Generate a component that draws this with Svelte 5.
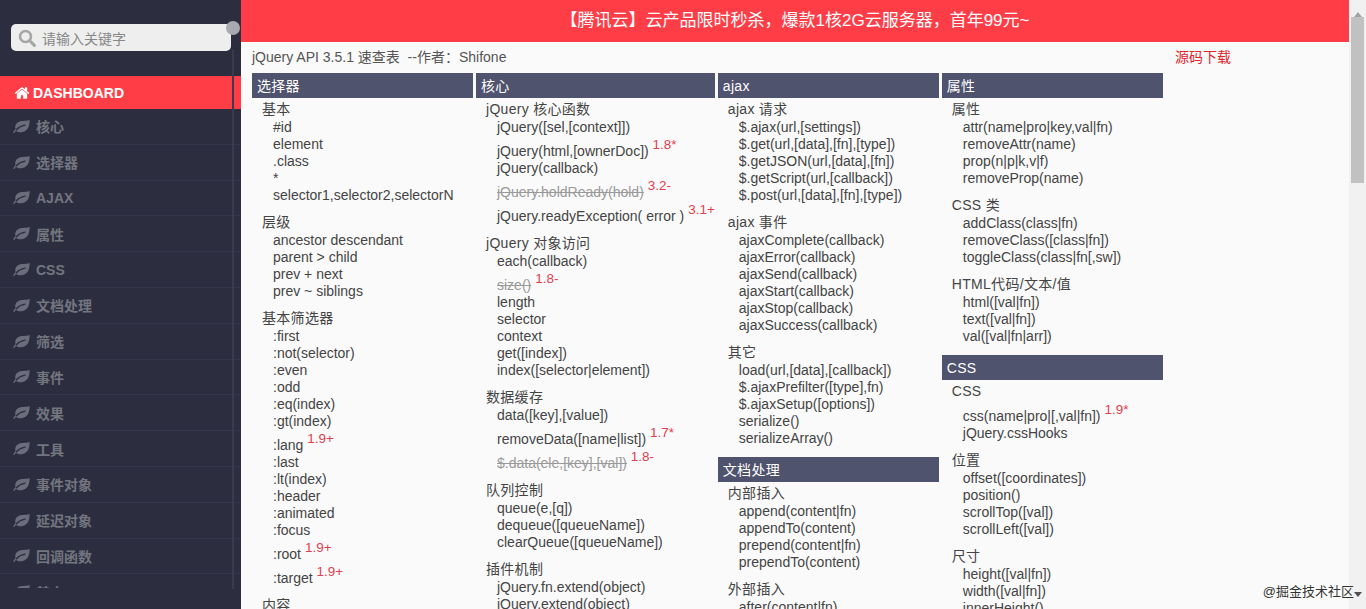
<script>
	const menu = ['核心', '选择器', 'AJAX', '属性', 'CSS', '文档处理', '筛选', '事件', '效果', '工具', '事件对象', '延迟对象', '回调函数', '其它'];

	// item: plain string, or [text, version, removed]
	const columns = [
		[
			{
				head: '选择器',
				groups: [
					{ title: '基本', items: ['#id', 'element', '.class', '*', 'selector1,selector2,selectorN'] },
					{ title: '层级', items: ['ancestor descendant', 'parent > child', 'prev + next', 'prev ~ siblings'] },
					{
						title: '基本筛选器',
						items: [':first', ':not(selector)', ':even', ':odd', ':eq(index)', ':gt(index)', [':lang', '1.9+'], ':last', ':lt(index)', ':header', ':animated', ':focus', [':root', '1.9+'], [':target', '1.9+']]
					},
					{ title: '内容', items: [':contains(text)'] }
				]
			}
		],
		[
			{
				head: '核心',
				groups: [
					{
						title: 'jQuery 核心函数',
						items: ['jQuery([sel,[context]])', ['jQuery(html,[ownerDoc])', '1.8*'], 'jQuery(callback)', ['jQuery.holdReady(hold)', '3.2-', true], ['jQuery.readyException( error )', '3.1+']]
					},
					{
						title: 'jQuery 对象访问',
						items: ['each(callback)', ['size()', '1.8-', true], 'length', 'selector', 'context', 'get([index])', 'index([selector|element])']
					},
					{ title: '数据缓存', items: ['data([key],[value])', ['removeData([name|list])', '1.7*'], ['$.data(ele,[key],[val])', '1.8-', true]] },
					{ title: '队列控制', items: ['queue(e,[q])', 'dequeue([queueName])', 'clearQueue([queueName])'] },
					{ title: '插件机制', items: ['jQuery.fn.extend(object)', 'jQuery.extend(object)'] }
				]
			}
		],
		[
			{
				head: 'ajax',
				groups: [
					{ title: 'ajax 请求', items: ['$.ajax(url,[settings])', '$.get(url,[data],[fn],[type])', '$.getJSON(url,[data],[fn])', '$.getScript(url,[callback])', '$.post(url,[data],[fn],[type])'] },
					{ title: 'ajax 事件', items: ['ajaxComplete(callback)', 'ajaxError(callback)', 'ajaxSend(callback)', 'ajaxStart(callback)', 'ajaxStop(callback)', 'ajaxSuccess(callback)'] },
					{ title: '其它', items: ['load(url,[data],[callback])', '$.ajaxPrefilter([type],fn)', '$.ajaxSetup([options])', 'serialize()', 'serializeArray()'] }
				]
			},
			{
				head: '文档处理',
				groups: [
					{ title: '内部插入', items: ['append(content|fn)', 'appendTo(content)', 'prepend(content|fn)', 'prependTo(content)'] },
					{ title: '外部插入', items: ['after(content|fn)'] }
				]
			}
		],
		[
			{
				head: '属性',
				groups: [
					{ title: '属性', items: ['attr(name|pro|key,val|fn)', 'removeAttr(name)', 'prop(n|p|k,v|f)', 'removeProp(name)'] },
					{ title: 'CSS 类', items: ['addClass(class|fn)', 'removeClass([class|fn])', 'toggleClass(class|fn[,sw])'] },
					{ title: 'HTML代码/文本/值', items: ['html([val|fn])', 'text([val|fn])', 'val([val|fn|arr])'] }
				]
			},
			{
				head: 'CSS',
				groups: [
					{ title: 'CSS', items: [['css(name|pro|[,val|fn])', '1.9*'], 'jQuery.cssHooks'] },
					{ title: '位置', items: ['offset([coordinates])', 'position()', 'scrollTop([val])', 'scrollLeft([val])'] },
					{ title: '尺寸', items: ['height([val|fn])', 'width([val|fn])', 'innerHeight()'] }
				]
			}
		]
	];

	const norm = (it) => (Array.isArray(it) ? it : [it, null, false]);
</script>

<div class="page">
	<aside class="sidebar">
		<div class="search">
			<svg class="search-icon" viewBox="0 0 18 18" width="18" height="18" fill="none" stroke="#a6a6a6">
				<circle cx="7.5" cy="7.5" r="5.5" stroke-width="2.6" />
				<path d="M11.8 11.8 16.4 16.4" stroke-width="3" stroke-linecap="round" />
			</svg>
			<span>请输入关键字</span>
		</div>
		<span class="thumb-dot"></span>
		<a class="dash" href="#top">
			<svg viewBox="0 0 1792 1792" width="16" height="16" fill="#fff">
				<path d="M1472 992v480q0 26-19 45t-45 19h-384v-384h-256v384h-384q-26 0-45-19t-19-45v-480q0-1 .5-3t.5-3l575-474 575 474q1 2 1 6zm223-69l-62 74q-8 9-21 11h-3q-13 0-21-7l-692-577-692 577q-12 8-24 7-13-2-21-11l-62-74q-8-10-7-23.500t11-21.500l719-599q32-26 76-26t76 26l244 204v-195q0-14 9-23t23-9h192q14 0 23 9t9 23v408l219 182q10 8 11 21.500t-7 23.500z" />
			</svg>
			DASHBOARD
		</a>
		<nav class="menu">
			{#each menu as name}
				<div class="menu-item">
					<svg viewBox="0 0 17 15" width="17" height="15">
						<path fill="#6b6d7c" d="M16.6.6C15.9 1.700 14.500 1.700 12.200 1.800 8.500 1.900 5.400 2.300 3.500 4.600 2.300 6 1.900 8 2.500 10 1.700 11 .9 12 .3 13.300c-.2.5.6 1.100 1 .6.500-.8 1.100-1.500 1.800-2.200 1.300 1.300 3.300 1.900 5.500 1.500 4-.6 6.600-3 7.500-7 .4-1.900.6-3.900.5-5.600z" />
						<path fill="none" stroke="#2c2e3f" stroke-width="1.300" stroke-linecap="round" d="M3.300 10.800C5.500 8.400 8.400 6.800 12 6.200" />
					</svg>
					<span>{name}</span>
				</div>
			{/each}
		</nav>
	</aside>

	<div class="main">
		<div class="banner">【腾讯云】云产品限时秒杀，爆款1核2G云服务器，首年99元~</div>
		<div class="top-line">
			<span class="doc-title">jQuery API 3.5.1 速查表&nbsp; --作者：Shifone</span>
			<a class="download" href="#top">源码下载</a>
		</div>
		<div class="columns">
			{#each columns as col}
				<div class="col">
					{#each col as section}
						<section>
							<h2>{section.head}</h2>
							{#each section.groups as group}
								<div class="group">
									<h3>{group.title}</h3>
									{#each group.items.map(norm) as [text, ver, removed]}
										<div class="item">
											<span class:removed>{text}</span>
											{#if ver}<sup>{ver}</sup>{/if}
										</div>
									{/each}
								</div>
							{/each}
						</section>
					{/each}
				</div>
			{/each}
		</div>
		<span class="watermark">@掘金技术社区</span>
	</div>

	<div class="scrollbar">
		<span class="arrow up"></span>
		<span class="bar"></span>
		<span class="arrow down"></span>
	</div>
</div>

<style>
	:global(body) {
		margin: 0;
		overflow: hidden;
	}

	.page {
		display: flex;
		height: 609px;
		overflow: hidden;
		font-family: "Liberation Sans", "Noto Sans CJK SC", sans-serif;
		font-size: 14px;
		color: #444;
		background: #fafafa;
	}

	a {
		text-decoration: none;
	}

	/* sidebar */
	.sidebar {
		position: relative;
		display: flex;
		flex-direction: column;
		flex: 0 0 241px;
		height: 609px;
		background: #2c2e3f;
		box-sizing: border-box;
		padding-top: 24px;
	}

	.sidebar::after {
		content: '';
		position: absolute;
		left: 232px;
		top: 50px;
		bottom: 20px;
		width: 2px;
		background: #3a3c4d;
	}

	.search {
		display: flex;
		align-items: center;
		gap: 6px;
		width: 220px;
		height: 27px;
		margin-left: 11px;
		padding-left: 7px;
		box-sizing: border-box;
		border-radius: 5px;
		background: #eee;
		color: #888;
	}

	.search-icon {
		flex: none;
	}

	.thumb-dot {
		position: absolute;
		left: 226px;
		top: 21px;
		width: 14px;
		height: 14px;
		border-radius: 50%;
		background: #a9a9b2;
	}

	.dash {
		display: flex;
		align-items: center;
		gap: 3px;
		height: 33px;
		margin-top: 25px;
		padding-left: 14px;
		background: #ff3d47;
		color: #fff;
		font-weight: 700;
		font-size: 14px;
	}

	.menu {
		height: 479px;
		overflow: hidden;
	}

	.menu-item {
		display: flex;
		align-items: center;
		gap: 6px;
		height: 35.8px;
		box-sizing: border-box;
		padding-left: 13px;
		border-bottom: 1px solid #33354a;
		color: #73757f;
		font-weight: 700;
		font-size: 14px;
	}

	/* main */
	.main {
		position: relative;
		flex: 1;
		min-width: 0;
	}

	.banner {
		height: 42px;
		line-height: 42px;
		text-align: center;
		background: #ff3d47;
		color: #fff;
		font-size: 17px;
	}

	.top-line {
		display: flex;
		height: 31px;
		line-height: 30px;
		padding-left: 11px;
		font-size: 14px;
	}

	.doc-title {
		width: 923px;
		color: #555;
	}

	.download {
		color: #e3242b;
	}

	.columns {
		display: flex;
		gap: 3px;
		padding-left: 11px;
	}

	.col {
		flex: 0 0 221px;
	}

	section {
		margin-bottom: 10px;
	}

	h2 {
		margin: 0 0 1px;
		height: 25px;
		line-height: 26px;
		padding-left: 5px;
		background: #4f536e;
		color: #fff;
		font-size: 14px;
		font-weight: 400;
		letter-spacing: 0.3px;
	}

	.group {
		margin-bottom: 8px;
		padding-left: 10px;
	}

	h3 {
		margin: 0;
		height: 20px;
		line-height: 20px;
		font-size: 14px;
		font-weight: 400;
		color: #444;
		letter-spacing: 0.3px;
	}

	.item {
		padding-left: 11px;
		line-height: 17px;
		color: #444;
		white-space: nowrap;
	}

	.removed {
		color: #999;
		text-decoration: line-through;
	}

	sup {
		vertical-align: 7px;
		line-height: 17px;
		font-size: 13.500px;
		color: #e2404e;
	}

	.watermark {
		position: absolute;
		right: -5px;
		top: 581px;
		font-size: 13px;
		color: #333;
		text-shadow: 0 0 2px #fff;
	}

	/* fake window scrollbar */
	.scrollbar {
		display: flex;
		flex-direction: column;
		align-items: center;
		flex: 0 0 17px;
		background: #f1f1f1;
	}

	.arrow {
		flex: 0 0 17px;
		box-sizing: border-box;
		width: 0;
		height: 0;
		border-left: 4px solid transparent;
		border-right: 4px solid transparent;
	}

	.arrow.up {
		height: 17px;
		border-bottom: 5px solid #a3a3a3;
		border-top: 6px solid transparent;
	}

	.arrow.down {
		height: 17px;
		margin-top: auto;
		border-top: 5px solid #505050;
		border-bottom: 6px solid transparent;
	}

	.bar {
		flex: 0 0 166px;
		width: 13px;
		background: #c1c1c1;
	}
</style>
